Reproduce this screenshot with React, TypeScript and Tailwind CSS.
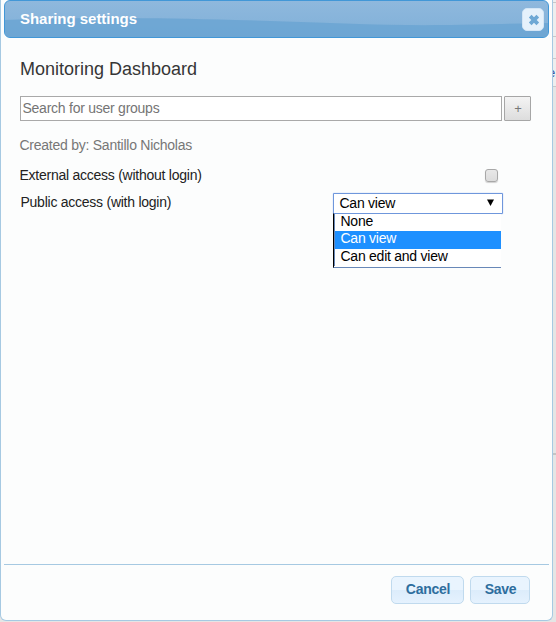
import React from "react";

const OPTIONS = ["None", "Can view", "Can edit and view"];

function TitleBar() {
  return (
    <header className="relative flex h-[38px] shrink-0 items-center justify-between overflow-hidden rounded-[6px] border border-[#4297d7] bg-linear-to-b from-[#8fb8dd] to-[#7fb0d8] pl-[15px] pr-1">
      <svg className="absolute inset-0 h-full w-full" viewBox="0 0 543 36" preserveAspectRatio="none">
        <path d="M0 19 C90 16 150 17 230 19 S380 25 440 24 T543 22 V36 H0Z" fill="#6ba4d2" fillOpacity=".85" />
      </svg>
      <h1 className="relative text-[15px] leading-5 font-bold tracking-[-0.03px] text-white">Sharing settings</h1>
      <button className="relative flex h-[23px] w-[22px] items-center justify-center rounded-[5px] border border-[#d3e5f5] bg-[#e5f1fb]" aria-label="Close">
        <svg width="12" height="12" viewBox="0 0 12 12" className="mt-0.5 ml-px">
          <path d="M2.2 2.2 9.8 9.8M9.8 2.2 2.2 9.8" stroke="#6da8d5" strokeWidth="3.8" />
        </svg>
      </button>
    </header>
  );
}

function AccessSelect() {
  return (
    <div className="relative mt-px w-[170px]">
      <div className="flex h-[21px] items-center justify-between rounded-[1px] border border-[#6f97dc] bg-white pl-[5.5px] pr-[9px] text-black shadow-[0_0_1px_#6f9be8]">
        <span className="pb-px leading-[18px]">Can view</span>
        <svg width="7" height="7" viewBox="0 0 7 7" className="-mr-px mb-0.5">
          <path d="M0 0.5H7L3.5 7Z" fill="#000" />
        </svg>
      </div>
      <ul className="absolute top-5 left-0 h-[55px] w-[168px] border-t border-b border-l border-t-[#6f97dc] border-b-[#6888b8] border-l-black bg-white text-black">
        {OPTIONS.map((option) => (
          <li
            key={option}
            className={
              option === "Can view"
                ? "h-[18px] border-l border-[#6888b8] bg-[#1e90ff] pl-[5.5px] leading-[15px] text-white"
                : "h-[17px] border-l border-[#6888b8] pl-[5.5px] leading-[15px]"
            }
          >
            {option}
          </li>
        ))}
      </ul>
    </div>
  );
}

function DialogButton({ label, width }: { label: string; width: string }) {
  return (
    <button
      className={`${width} h-7 rounded-[5px] border border-[#c0daee] bg-linear-to-b from-[#e9f4fe] from-50% via-[#dcecfb] via-50% to-[#e5f2fe] pb-0.5 pl-px text-sm leading-5 font-bold tracking-[-0.26px] text-[#2e6e9e]`}
    >
      {label}
    </button>
  );
}

export default function App() {
  return (
    <div className="relative h-[622px] w-[556px] overflow-hidden bg-[#e5e5e5] font-['Liberation_Sans',Arial,sans-serif] text-sm tracking-[-0.25px] text-[#222]">
      <div className="absolute top-0 left-[553px] h-[87px] w-[3px] overflow-hidden bg-[#eee]">
        <div className="h-[3px] border-b border-[#c8c8c8]" />
        <div className="h-[34px] border-b border-[#c8c8c8]" />
        <div className="h-[22px] border-b border-[#c8c8c8]" />
        <span className="-ml-[5px] block h-[28px] border-b border-[#c8c8c8] pt-1.5 text-[13px] leading-4 text-[#2e55a5]">e</span>
      </div>
      <div className="absolute top-[453px] left-[553px] h-0.5 w-[3px] bg-[#c4c4c4]" />

      <div className="relative flex h-[621px] w-[553px] flex-col rounded-b-[6px] border border-t-0 border-[#a6c9e2] bg-[#fcfdfd] px-[3px]">
        <TitleBar />
        <main className="flex grow flex-col pr-[46px] pl-4">
          <h2 className="mt-[19px] text-lg leading-6 tracking-normal text-[#363636]">Monitoring Dashboard</h2>
          <div className="mt-[15px] flex gap-0.5">
            <input
              className="h-[25px] w-[482px] shrink-0 border border-[#a9a9a9] bg-white px-[1.5px] pb-0.5 outline-none placeholder:text-[#757575]"
              placeholder="Search for user groups"
            />
            <button className="h-[25px] w-[27px] shrink-0 rounded-[1px] border border-[#a6a6a6] bg-linear-to-b from-[#f4f4f4] to-[#dddddd] pl-px text-[13px] leading-5 text-[#777]">
              +
            </button>
          </div>
          <p className="mt-[14px] -ml-[0.5px] leading-5 text-[#777]">Created by: Santillo Nicholas</p>
          <div className="mt-2.5 -ml-[0.5px] flex h-5 items-center justify-between pr-[5px]">
            <span className="leading-5">External access (without login)</span>
            <span className="h-[13px] w-[13px] rounded-[3px] border border-[#a8a8a8] bg-linear-to-b from-[#e8e8e8] to-[#dcdcdc] shadow-[0_1px_1px_#d0d0d0]" />
          </div>
          <div className="mt-[7px] flex h-[22px] items-start justify-between pl-[0.5px]">
            <span className="leading-5">Public access (with login)</span>
            <AccessSelect />
          </div>
        </main>
        <footer className="flex h-14 shrink-0 justify-end gap-1.5 border-t border-[#a6c9e2] pt-[11px] pr-[19px]">
          <DialogButton label="Cancel" width="w-[73px]" />
          <DialogButton label="Save" width="w-[60px]" />
        </footer>
      </div>
    </div>
  );
}
